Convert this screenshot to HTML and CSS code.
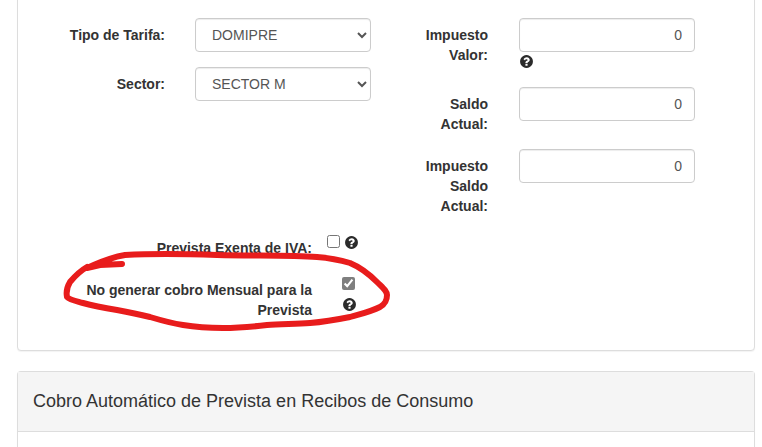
FILE: index.html

```html
<!DOCTYPE html>
<html lang="en">
<head>
  <meta charset="UTF-8" />
  <title>Previsa</title>
  <link rel="stylesheet" href="styles.css">
</head>
<body>

<svg width="0" height="0" class="defs">
  <symbol id="help" viewBox="0 0 1792 1792">
    <path d="M1024 1376v-192q0-14-9-23t-23-9h-192q-14 0-23 9t-9 23v192q0 14 9 23t23 9h192q14 0 23-9t9-23zm256-672q0-88-55.5-163t-138.5-116-170-41q-243 0-371 213-15 24 8 42l132 100q7 6 19 6 16 0 25-12 53-68 86-92 34-24 86-24 48 0 85.5 26t37.5 59q0 38-20 61t-68 45q-63 28-115.5 86.5t-52.5 125.5v36q0 14 9 23t23 9h192q14 0 23-9t9-23q0-19 21.5-49.5t54.5-49.5q32-18 49-28.5t46-35 44.5-48 28-60.5 12.5-81zm384 192q0 209-103 385.5t-279.5 279.5-385.5 103-385.5-103-279.5-279.5-103-385.5 103-385.5 279.5-279.5 385.5-103 385.5 103 279.5 279.5 103 385.5z"/>
  </symbol>
</svg>

<div class="panel panel-form">
  <div class="columns">
    <div class="col-left">
      <div class="row">
        <label class="row-label">Tipo de Tarifa:</label>
        <select class="control"><option>DOMIPRE</option></select>
      </div>
      <div class="row">
        <label class="row-label">Sector:</label>
        <select class="control"><option>SECTOR M</option></select>
      </div>
    </div>
    <div class="col-right">
      <div class="row">
        <label class="row-label">Impuesto Valor:</label>
        <div>
          <input class="control number" type="text" value="0">
          <div class="help-line"><svg class="help"><use href="#help"/></svg></div>
        </div>
      </div>
      <div class="row">
        <label class="row-label">Saldo Actual:</label>
        <input class="control number" type="text" value="0">
      </div>
      <div class="row">
        <label class="row-label">Impuesto Saldo Actual:</label>
        <input class="control number" type="text" value="0">
      </div>
    </div>
  </div>

  <div class="row row-check">
    <label class="row-label">Prevista Exenta de IVA:</label>
    <div class="check-box">
      <input type="checkbox">
      <svg class="help"><use href="#help"/></svg>
    </div>
  </div>
  <div class="row row-check">
    <label class="row-label">No generar cobro Mensual para la Prevista</label>
    <div class="check-box stacked">
      <input type="checkbox" checked>
      <svg class="help"><use href="#help"/></svg>
    </div>
  </div>
</div>

<div class="panel panel-auto">
  <div class="panel-heading">Cobro Automático de Prevista en Recibos de Consumo</div>
  <div class="panel-body"></div>
</div>

<!-- hand drawn mark over the screenshot -->
<svg class="scribble" width="762" height="447" viewBox="0 0 762 447">
  <path d="M122 264 L100 265 L87 268 C100 262 112 257 125 255 C160 253 190 254 217 255 C255 256 290 255 317 257 C330 258 340 260 350 263 C362 268 370 275 377 282 C383 288 387 291 387 295 C387 301 385 304 380 307 C370 312 360 314 350 317 C335 320 322 322 310 323 C295 324 280 324 267 325 C250 327 237 328 223 328 C208 328 195 327 183 325 C170 323 160 320 150 317 C138 314 128 312 117 310 C105 308 94 306 83 303 C76 301 70 300 67 297 C66 292 67 287 70 282 C75 276 80 271 87 267" fill="none" stroke="#e81c1c" stroke-width="6" stroke-linecap="round" stroke-linejoin="round"/>
</svg>

</body>
</html>
```

FILE: styles.css

```css
html, body {
  height: 100%;
  margin: 0;
  overflow: hidden;
  font-family: 'Liberation Sans', Arial, sans-serif;
  font-size: 14px;
  line-height: 20px;
  color: #333;
  background: white;
}

.defs {
  display: block;
  height: 0;
}

.panel {
  margin: 0 7px 20px 17px;
  background: white;
  border: 1px solid #ddd;
  border-radius: 4px;
  box-shadow: 0 1px 1px rgba(0,0,0,0.05);
}

.panel-form {
  margin-top: -20px;
  padding: 37px 0 15px;
}

.panel-auto {
  margin-bottom: 0;
  border-bottom: none;
  border-radius: 4px 4px 0 0;
}

.panel-heading {
  padding: 18px 15px;
  height: 23px;
  font-size: 18px;
  line-height: 23px;
  background: #f5f5f5;
  border-bottom: 1px solid #ddd;
}

.panel-body {
  height: 15px;
}

.columns {
  display: flex;
}

.col-left {
  width: 353px;
}

.col-left .row-label {
  width: 147px;
  margin-right: 30px;
}

.col-right {
  margin-left: 29px;
}

.col-right .row-label {
  width: 88px;
  margin-right: 31px;
}

.row {
  display: flex;
  align-items: flex-start;
  margin-bottom: 15px;
}

.row-label {
  flex: none;
  padding-top: 7px;
  text-align: right;
  font-weight: bold;
}

.control {
  display: block;
  width: 176px;
  height: 34px;
  box-sizing: border-box;
  padding: 6px 12px;
  font-family: inherit;
  font-size: 14px;
  color: #555;
  background: white;
  border: 1px solid #ccc;
  border-radius: 4px;
  box-shadow: inset 0 1px 1px rgba(0,0,0,0.075);
}

.number {
  text-align: right;
}

.help-line {
  height: 20px;
}

.help {
  display: inline-block;
  width: 15px;
  height: 15px;
  fill: #2b2b2b;
}

.help-line .help {
  vertical-align: -2px;
}

.row-check .row-label {
  width: 250px;
  margin: 0 15px 0 44px;
}

.check-box {
  display: flex;
  align-items: center;
  gap: 4px;
  height: 14px;
  padding-top: 3px;
}

.check-box input {
  width: 13px;
  height: 13px;
  margin: 0;
  accent-color: #7f7f7f;
}

.check-box .help {
  margin-top: 3px;
}

.stacked {
  display: block;
  height: auto;
  padding: 4px 0 0 15px;
}

.stacked input {
  display: block;
  margin-bottom: 7px;
}

.stacked .help {
  margin-top: 0;
}

.scribble {
  position: absolute;
  left: 0;
  top: 0;
  pointer-events: none;
}
```
